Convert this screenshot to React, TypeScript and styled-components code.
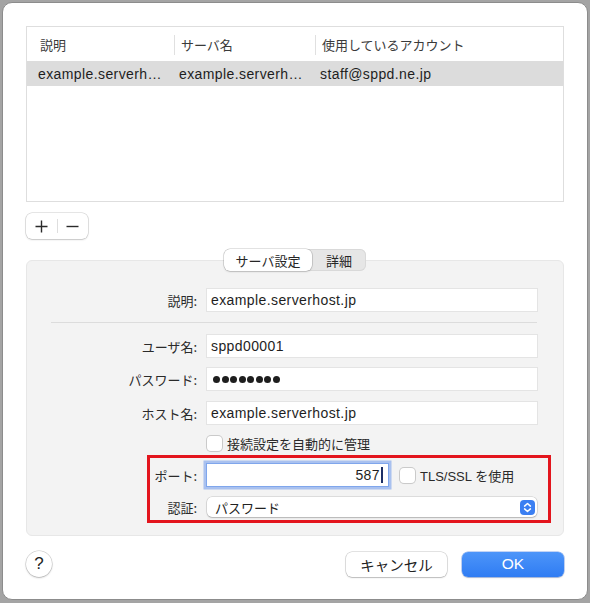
import React from "react";
import styled, { createGlobalStyle } from "styled-components";

const JP = `"Noto Sans CJK JP", sans-serif`;
const LATIN = `"Liberation Sans", "Noto Sans CJK JP", sans-serif`;

const GlobalStyle = createGlobalStyle`
  * { box-sizing: border-box; }
  html, body { margin: 0; padding: 0; }
  body {
    background: #a4a4a4;
    font-family: ${LATIN};
    color: #222;
    -webkit-font-smoothing: antialiased;
  }
  #root { padding: 2px; }
`;

// window
const Dialog = styled.div`
  width: 586px;
  height: 598px;
  background: #fff;
  border: 1px solid #8c8c8c;
  border-radius: 10px;
  padding: 23px;
  display: flex;
  flex-direction: column;
`;

// account list
const Table = styled.div`
  height: 176px;
  border: 1px solid #dedede;
  background: #fff;
  flex-shrink: 0;
`;

const TableRow = styled.div<{ $head?: boolean; $selected?: boolean }>`
  display: grid;
  grid-template-columns: 147px 141px 1fr;
  align-items: center;
  height: ${(p) => (p.$head ? 34 : 25)}px;
  background: ${(p) => (p.$selected ? "#dcdcdc" : "transparent")};
`;

const HeadCell = styled.div<{ $first?: boolean }>`
  position: relative;
  padding-left: ${(p) => (p.$first ? 13 : 7)}px;
  font-family: ${JP};
  font-size: 13px;
  line-height: 19px;
  color: #3a3a3a;
  &::before {
    content: "";
    display: ${(p) => (p.$first ? "none" : "block")};
    position: absolute;
    left: 0;
    top: 0;
    width: 1px;
    height: 20px;
    background: #e0e0e0;
  }
`;

const Cell = styled.div<{ $first?: boolean }>`
  padding-left: ${(p) => (p.$first ? 11 : 5)}px;
  padding-right: 6px;
  font-size: 14px;
  letter-spacing: 0.4px;
  color: #1e1e1e;
  white-space: nowrap;
  overflow: hidden;
  text-overflow: ellipsis;
`;

// +/- control
const AddRemove = styled.div`
  margin-top: 11px;
  width: 62px;
  height: 26px;
  flex-shrink: 0;
  display: flex;
  align-items: center;
  background: #fff;
  border-radius: 6px;
  box-shadow: 0 0 0 0.5px rgba(0, 0, 0, 0.2), 0 1px 2px rgba(0, 0, 0, 0.14);
`;

const SmallButton = styled.button`
  flex: 1;
  height: 100%;
  border: 0;
  padding: 0;
  background: none;
  display: flex;
  align-items: center;
  justify-content: center;
`;

const Divider = styled.span`
  width: 1px;
  height: 14px;
  background: #dedede;
`;

// tabs
const TabBar = styled.div`
  align-self: center;
  margin-top: 10px;
  margin-bottom: -11px;
  position: relative;
  z-index: 1;
  display: flex;
  height: 22px;
  background: #e6e6e6;
  border-radius: 6px;
  box-shadow: inset 0 0 0 1px #d9d9d9;
`;

const Tab = styled.div<{ $active?: boolean; $width: number }>`
  width: ${(p) => p.$width}px;
  height: 22px;
  display: flex;
  align-items: center;
  justify-content: center;
  font-family: ${JP};
  font-size: 13px;
  color: #262626;
  border-radius: 6px;
  background: ${(p) => (p.$active ? "#fff" : "transparent")};
  box-shadow: ${(p) =>
    p.$active ? "0 0 0 0.5px rgba(0,0,0,.22), 0 1px 2px rgba(0,0,0,.14)" : "none"};
`;

// settings panel
const Panel = styled.div`
  height: 276px;
  flex-shrink: 0;
  background: #f3f3f3;
  border: 1px solid #e7e7e7;
  border-radius: 6px;
  padding-top: 28px;
  display: flex;
  flex-direction: column;
`;

const Row = styled.div<{ $top?: number }>`
  display: flex;
  align-items: center;
  height: 22px;
  margin-top: ${(p) => p.$top ?? 0}px;
`;

const Label = styled.div<{ $width?: number }>`
  width: ${(p) => p.$width ?? 170}px;
  margin-right: 10px;
  text-align: right;
  font-family: ${JP};
  font-size: 13px;
  color: #2a2a2a;
  white-space: nowrap;
`;

const Field = styled.div<{ $width?: number; $focused?: boolean }>`
  width: ${(p) => p.$width ?? 330}px;
  height: 22px;
  padding: 0 4px;
  display: flex;
  align-items: center;
  justify-content: ${(p) => (p.$focused ? "flex-end" : "flex-start")};
  background: #fff;
  font-size: 14px;
  letter-spacing: 0.4px;
  color: #1e1e1e;
  box-shadow: ${(p) =>
    p.$focused
      ? "0 0 0 1px #7fa6ec, 0 0 0 3.5px rgba(120,160,236,.6)"
      : "0 0 0 1px #e4e4e4, 0 1px 0 #cdcdcd"};
`;

const Caret = styled.span`
  width: 2px;
  height: 16px;
  margin-left: 1px;
  margin-right: 1px;
  background: #1c2f66;
`;

const Dots = styled.div`
  display: flex;
  gap: 1.5px;
  padding-left: 2px;
`;

const Dot = styled.span`
  width: 7px;
  height: 7px;
  border-radius: 50%;
  background: #1e1e1e;
`;

const Separator = styled.div`
  margin: 11px 0 0 24px;
  width: 486px;
  height: 1px;
  background: #dcdcdc;
`;

const Checkbox = styled.span<{ $gap?: number }>`
  width: 15px;
  height: 15px;
  margin-left: ${(p) => p.$gap ?? 0}px;
  border-radius: 4px;
  background: #fff;
  box-shadow: 0 0 0 1px #cacaca, 0 1px 1px rgba(0, 0, 0, 0.08);
  flex-shrink: 0;
`;

const CheckLabel = styled.span`
  margin-left: 5px;
  font-size: 13px;
  color: #2a2a2a;
  white-space: nowrap;
`;

const Highlight = styled.div`
  margin: 1px 0 0 120px;
  width: 404px;
  border: 3px solid #e3151d;
  padding: 6px 11px 2px 0;
  display: flex;
  flex-direction: column;
`;

const Popup = styled.div`
  width: 330px;
  height: 20px;
  display: flex;
  align-items: center;
  justify-content: space-between;
  padding: 0 2px 0 8px;
  background: #fff;
  border-radius: 5px;
  box-shadow: 0 0 0 0.5px rgba(0, 0, 0, 0.18), 0 1px 1.5px rgba(0, 0, 0, 0.18);
  font-family: ${JP};
  font-size: 13px;
  color: #222;
`;

// footer
const Footer = styled.div`
  margin-top: 15px;
  display: flex;
  align-items: center;
  gap: 15px;
`;

const HelpButton = styled.button`
  width: 26px;
  height: 26px;
  margin-right: auto;
  border: 0;
  padding: 0;
  border-radius: 50%;
  background: #fff;
  box-shadow: 0 0 0 0.5px rgba(0, 0, 0, 0.22), 0 1px 2px rgba(0, 0, 0, 0.2);
  font-family: ${LATIN};
  font-size: 17px;
  color: #222;
`;

const Button = styled.button<{ $primary?: boolean }>`
  width: ${(p) => (p.$primary ? 102 : 101)}px;
  height: 25px;
  border: 0;
  border-radius: 6px;
  font-family: ${(p) => (p.$primary ? LATIN : JP)};
  font-size: ${(p) => (p.$primary ? 15.5 : 14.5)}px;
  color: ${(p) => (p.$primary ? "#fff" : "#222")};
  background: ${(p) => (p.$primary ? "linear-gradient(#4d95f9, #2f7cf3)" : "#fff")};
  box-shadow: ${(p) =>
    p.$primary
      ? "0 0 0 0.5px rgba(20,90,220,.5), 0 1px 1.5px rgba(0,0,0,.18)"
      : "0 0 0 0.5px rgba(0,0,0,.22), 0 1px 1.5px rgba(0,0,0,.18)"};
`;

const Plus = () => (
  <svg width="13" height="13" viewBox="0 0 13 13">
    <path d="M6.5 0.5v12M0.5 6.5h12" stroke="#2a2a2a" strokeWidth="1.4" fill="none" />
  </svg>
);

const Minus = () => (
  <svg width="13" height="13" viewBox="0 0 13 13">
    <path d="M0.5 6.5h12" stroke="#2a2a2a" strokeWidth="1.4" fill="none" />
  </svg>
);

const Stepper = () => (
  <svg width="15" height="15" viewBox="0 0 15 15">
    <rect width="15" height="15" rx="4" fill="#3b7ff2" />
    <path d="M4.6 6.1L7.5 3.5L10.4 6.1M4.6 8.9L7.5 11.5L10.4 8.9" stroke="#fff" strokeWidth="1.5" fill="none" strokeLinecap="round" strokeLinejoin="round" />
  </svg>
);

const accounts = [
  { desc: "example.serverhost.jp", server: "example.serverhost.jp", account: "staff@sppd.ne.jp" },
];

export default function App() {
  return (
    <>
      <GlobalStyle />
      <Dialog>
        <Table>
          <TableRow $head>
            <HeadCell $first>説明</HeadCell>
            <HeadCell>サーバ名</HeadCell>
            <HeadCell>使用しているアカウント</HeadCell>
          </TableRow>
          {accounts.map((a) => (
            <TableRow key={a.account} $selected>
              <Cell $first>{a.desc}</Cell>
              <Cell>{a.server}</Cell>
              <Cell>{a.account}</Cell>
            </TableRow>
          ))}
        </Table>

        <AddRemove>
          <SmallButton type="button"><Plus /></SmallButton>
          <Divider />
          <SmallButton type="button"><Minus /></SmallButton>
        </AddRemove>

        <TabBar>
          <Tab $active $width={88}>サーバ設定</Tab>
          <Tab $width={54}>詳細</Tab>
        </TabBar>

        <Panel>
          <Row>
            <Label>説明:</Label>
            <Field>example.serverhost.jp</Field>
          </Row>
          <Separator />
          <Row $top={12}>
            <Label>ユーザ名:</Label>
            <Field>sppd00001</Field>
          </Row>
          <Row $top={11}>
            <Label>パスワード:</Label>
            <Field>
              <Dots>
                {Array.from({ length: 8 }).map((_, i) => (
                  <Dot key={i} />
                ))}
              </Dots>
            </Field>
          </Row>
          <Row $top={12}>
            <Label>ホスト名:</Label>
            <Field>example.serverhost.jp</Field>
          </Row>
          <Row $top={8}>
            <Label />
            <Checkbox />
            <CheckLabel>接続設定を自動的に管理</CheckLabel>
          </Row>

          <Highlight>
            <Row>
              <Label $width={47}>ポート:</Label>
              <Field $width={181} $focused>
                587<Caret />
              </Field>
              <Checkbox $gap={12} />
              <CheckLabel>TLS/SSL を使用</CheckLabel>
            </Row>
            <Row $top={10}>
              <Label $width={47}>認証:</Label>
              <Popup>
                パスワード
                <Stepper />
              </Popup>
            </Row>
          </Highlight>
        </Panel>

        <Footer>
          <HelpButton type="button">?</HelpButton>
          <Button type="button">キャンセル</Button>
          <Button type="button" $primary>OK</Button>
        </Footer>
      </Dialog>
    </>
  );
}
